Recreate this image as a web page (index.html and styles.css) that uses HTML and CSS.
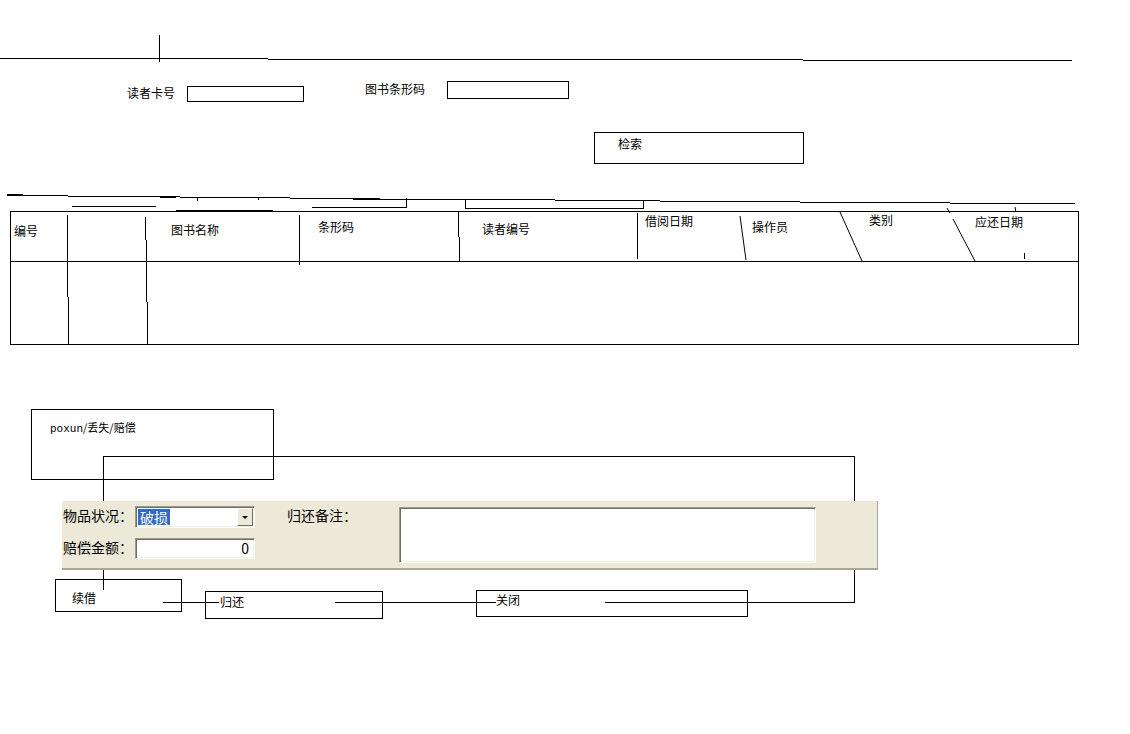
FILE: index.html
```html
<!DOCTYPE html>
<html lang="zh-CN">
<head>
    <meta charset="UTF-8">
    <title>还书</title>
    <link rel="stylesheet" href="styles.css">
</head>
<body>
<div class="canvas">

    <!-- sketch lines that sit behind the boxes -->
    <svg class="lines" width="1130" height="734" viewBox="0 0 1130 734">
        <g fill="none" stroke="#000" stroke-width="1" shape-rendering="crispEdges">
            <!-- top rule -->
            <path d="M0 58.5 H268 M268 59.5 H803 M803 60.5 H1072 M159.5 35 V62"/>
            <!-- rough strokes over the grid -->
            <path d="M7 195.5 H68 M7 194.5 H23 M68 196.5 H180 M160 197.5 H176 M180 197.5 H290 M290 198.5 H380 M353 199.5 H406 M406 199.5 H555 M555 200.5 H660 M660 201.5 H800 M800 202.5 H950 M950 203.5 H1075"/>
            <path d="M72 206.5 H156 M176 210.5 H273 M312 207.5 H406.5 V198 M465.5 200 V208.5 H643.5 V200 M197.5 197 V201 M258.5 198 V200"/>
            <!-- grid column dividers -->
            <path d="M67.5 215 V297 M68.5 297 V344 M145.5 217 V240 M146.5 240 V302 M147.5 302 V344 M299.5 215 V265 M458.5 212 V237 M459.5 237 V261 M637.5 213 V259 M1024.5 253 V259"/>
            <path shape-rendering="auto" d="M740 216 L746 260 M840 212 L862 261 M947 208 L950 213 M953 219 L975 261 M1015 207 L1016 212"/>
            <!-- connector frame -->
            <path d="M103.5 501 V456.5 H854.5 V602.5 H605 M496 602.5 H335 M219 602.5 H163 M103.5 569 V590"/>
        </g>
    </svg>

    <span class="label reader-label">读者卡号</span>
    <div class="box reader-field"></div>
    <span class="label barcode-label">图书条形码</span>
    <div class="box barcode-field"></div>

    <div class="box search-btn">检索</div>

    <div class="grid">
        <div class="grid-head">
            <span class="th" style="left:3px;top:12px">编号</span>
            <span class="th" style="left:160px;top:11px">图书名称</span>
            <span class="th" style="left:307px;top:8px">条形码</span>
            <span class="th" style="left:471px;top:10px">读者编号</span>
            <span class="th" style="left:634px;top:2px">借阅日期</span>
            <span class="th" style="left:741px;top:8px">操作员</span>
            <span class="th" style="left:858px;top:1px">类别</span>
            <span class="th" style="left:964px;top:3px">应还日期</span>
        </div>
    </div>

    <div class="box state-note"><span class="mono">poxun</span>/丢失/赔偿</div>

    <div class="panel">
        <span class="p-label state-label">物品状况：</span>
        <div class="sunken combo">
            <span class="selected">破损</span>
            <span class="drop-btn"><span class="arrow"></span></span>
        </div>
        <span class="p-label note-label">归还备注：</span>
        <div class="sunken memo"></div>
        <span class="p-label fee-label">赔偿金额：</span>
        <div class="sunken amount">0</div>
    </div>

    <div class="box renew-btn">续借</div>
    <div class="box return-btn">归还</div>
    <div class="box close-btn">关闭</div>

</div>
</body>
</html>
```

FILE: styles.css
```css
body {
    margin: 0;
    background: #fff;
    color: #000;
    font-family: "Noto Sans CJK SC", sans-serif;
    font-size: 12px;
}

.canvas {
    position: relative;
    width: 1130px;
    height: 734px;
    overflow: hidden;
}

.lines {
    position: absolute;
    left: 0;
    top: 0;
}

.label,
.th {
    position: absolute;
    line-height: 14px;
    white-space: nowrap;
}

.box {
    position: absolute;
    box-sizing: border-box;
    border: 1px solid #000;
    line-height: 14px;
    white-space: nowrap;
}

/* search row */
.reader-label { left: 127px; top: 86px; }
.reader-field { left: 187px; top: 86px; width: 117px; height: 16px; }
.barcode-label { left: 365px; top: 82px; }
.barcode-field { left: 447px; top: 81px; width: 122px; height: 18px; }

.search-btn {
    left: 594px;
    top: 132px;
    width: 210px;
    height: 32px;
    padding: 4px 0 0 23px;
}

/* result grid */
.grid {
    position: absolute;
    left: 10px;
    top: 211px;
    width: 1069px;
    height: 134px;
    box-sizing: border-box;
    border: 1px solid #000;
}

.grid-head {
    position: relative;
    height: 49px;
    border-bottom: 1px solid #000;
}

/* lower sketch */
.state-note {
    left: 31px;
    top: 409px;
    width: 243px;
    height: 71px;
    padding: 10px 0 0 18px;
    font-size: 11px;
}

.mono {
    font-family: "Liberation Mono", "DejaVu Sans Mono", monospace;
}

.renew-btn { left: 55px; top: 579px; width: 127px; height: 33px; padding: 11px 0 0 16px; }
.return-btn { left: 205px; top: 591px; width: 178px; height: 28px; padding: 3px 0 0 14px; }
.close-btn { left: 476px; top: 590px; width: 272px; height: 27px; padding: 2px 0 0 19px; }

/* windows style form strip */
.panel {
    position: absolute;
    left: 62px;
    top: 501px;
    width: 816px;
    height: 69px;
    box-sizing: border-box;
    padding: 5px 0 0 1px;
    background: #ece9d8;
    border-right: 1px solid #aca899;
    border-bottom: 2px solid #aca899;
    display: grid;
    grid-template-columns: 72px 120px 32px 112px 417px;
    grid-template-rows: 22px 21px;
    row-gap: 10px;
    font-size: 14px;
}

.p-label {
    line-height: 18px;
    white-space: nowrap;
}

.state-label { grid-column: 1; grid-row: 1; }
.fee-label { grid-column: 1; grid-row: 2; }
.note-label { grid-column: 4; grid-row: 1; }

.sunken {
    box-sizing: border-box;
    background: #fff;
    border: 1px solid;
    border-color: #9d9a8e #fff #fff #9d9a8e;
    box-shadow: inset 1px 1px 0 #716f64, inset -1px -1px 0 #f1efe2;
}

.combo {
    grid-column: 2;
    grid-row: 1;
    display: flex;
    justify-content: space-between;
    padding: 2px 1px 1px 2px;
}

.selected {
    background: #316ac5;
    color: #fff;
    line-height: 16px;
    height: 16px;
    padding: 0 2px;
}

.drop-btn {
    width: 16px;
    height: 18px;
    margin-top: -1px;
    box-sizing: border-box;
    background: #ece9d8;
    border: 1px solid;
    border-color: #fff #716f64 #716f64 #fff;
    display: flex;
    align-items: center;
    justify-content: center;
}

.arrow {
    width: 0;
    height: 0;
    border-left: 3px solid transparent;
    border-right: 3px solid transparent;
    border-top: 3px solid #000;
}

.memo {
    grid-column: 5;
    grid-row: 1 / span 2;
    height: 56px;
    margin-top: 1px;
}

.amount {
    grid-column: 2;
    grid-row: 2;
    text-align: right;
    padding-right: 5px;
    line-height: 19px;
}
```
